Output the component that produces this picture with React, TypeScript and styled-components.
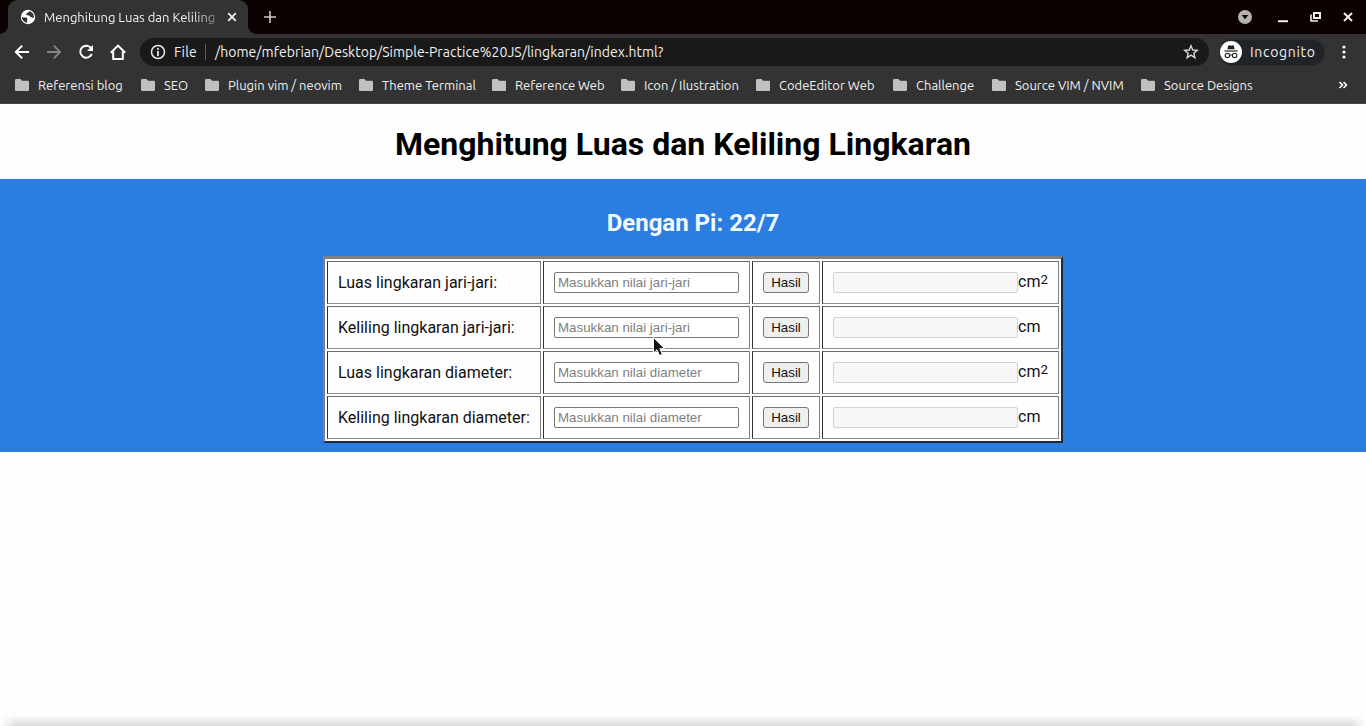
import React from "react";
import styled, { createGlobalStyle } from "styled-components";

const GlobalStyle = createGlobalStyle`
  * { box-sizing: border-box; }
  html, body { margin: 0; height: 100%; overflow: hidden; background: #fefefe; }
`;

const Window = styled.div`
  height: 726px;
  width: 1366px;
  display: flex;
  flex-direction: column;
  overflow: hidden;
  background: #fefefe;
  font-family: Roboto, "Liberation Sans", sans-serif;
`;

const ChromeText = styled.span<{ $w?: number; $size?: number; $spacing?: number }>`
  display: block;
  flex: none;
  width: ${(p) => (p.$w ? `${p.$w}px` : "auto")};
  font-family: Ubuntu, "Noto Sans", sans-serif;
  font-size: ${(p) => p.$size ?? 13}px;
  letter-spacing: ${(p) => p.$spacing ?? 0}px;
  line-height: 20px;
  color: #f0f0f0;
  white-space: nowrap;
`;

const TabStrip = styled.div`
  height: 34px;
  flex: none;
  display: flex;
  align-items: flex-start;
  background: #0b0100;
  padding-left: 8px;
`;

const Tab = styled.div`
  position: relative;
  width: 240px;
  height: 34px;
  display: flex;
  align-items: center;
  padding: 0 9px 0 12px;
  border-radius: 9px 9px 0 0;
  background: #333;
  &::before, &::after {
    content: "";
    position: absolute;
    bottom: 0;
    width: 8px;
    height: 8px;
  }
  &::before { left: -8px; background: radial-gradient(circle at 0 0, transparent 7.5px, #333 8px); }
  &::after { right: -8px; background: radial-gradient(circle at 100% 0, transparent 7.5px, #333 8px); }
`;

const TabTitle = styled.div`
  width: 175px;
  margin: 0 8px 0 8px;
  mask-image: linear-gradient(to right, #000 148px, rgba(0, 0, 0, 0.35) 172px);
`;

const NewTab = styled.div`
  margin: 10px 0 0 15px;
  height: 14px;
  display: flex;
`;

const WindowButtons = styled.div`
  margin-left: auto;
  height: 34px;
  display: flex;
  align-items: center;
  gap: 16px;
  padding-right: 10px;
`;

const Toolbar = styled.div`
  height: 36px;
  flex: none;
  display: flex;
  align-items: center;
  background: #333;
  padding: 0 14px 0 14px;
`;

const NavIcons = styled.div`
  display: flex;
  gap: 16px;
  width: 126px;
`;

const AddressBar = styled.div`
  width: 1069px;
  height: 28px;
  border-radius: 14px;
  background: #191919;
  display: flex;
  align-items: center;
  padding: 0 10px;
`;

const Divider = styled.div`
  width: 1px;
  height: 16px;
  margin: 0 9px 0 0;
  background: #5c5c5c;
`;

const Incognito = styled.div`
  width: 106px;
  height: 27px;
  margin-left: 10px;
  border-radius: 14px;
  background: #202327;
  box-shadow: inset 0 0 0 1px #2b2d30;
  display: flex;
  align-items: center;
  gap: 8px;
  padding-left: 1px;
`;

const Bookmarks = styled.div`
  height: 34px;
  flex: none;
  display: flex;
  align-items: center;
  padding: 0 18px 3px 15px;
  background: #333;
  border-bottom: 1px solid #454545;
`;

const Bookmark = styled.div<{ $w: number }>`
  width: ${(p) => p.$w}px;
  flex: none;
  display: flex;
  align-items: center;
  gap: 9px;
`;

const Overflow = styled.div`
  margin-left: auto;
  display: flex;
`;

const Title = styled.h1`
  height: 75px;
  margin: 0;
  flex: none;
  text-align: center;
  font-size: 32px;
  line-height: 38px;
  padding-top: 21px;
  font-weight: 700;
  color: #000;
`;

const Panel = styled.section`
  height: 273px;
  flex: none;
  display: flex;
  flex-direction: column;
  align-items: center;
  padding-left: 20px;
  background: #2b7de0;
`;

const Subtitle = styled.h2`
  margin: 30px 0 19px;
  height: 28px;
  font-size: 24px;
  line-height: 28px;
  font-weight: 700;
  text-align: center;
  color: #f4f9ff;
`;

const Table = styled.table`
  width: 740px;
  table-layout: fixed;
  border: 2px solid;
  border-color: #808080 #202a3a #202a3a #808080;
  border-top-width: 3px;
  border-bottom-width: 2px;
  border-collapse: separate;
  border-spacing: 2px;
  background: #fefefe;
  color: #111;
  font-size: 16px;
`;

const Cell = styled.td<{ $w: number }>`
  width: ${(p) => p.$w}px;
  height: 43px;
  padding: 0 10px;
  border: 1px solid;
  border-color: #6b6b6b #808080 #8c8c8c #333;
  white-space: nowrap;
  vertical-align: middle;
`;

const Field = styled.input`
  display: block;
  width: 185px;
  height: 21px;
  padding: 1px 3px;
  border: 1px solid #767676;
  border-radius: 2px;
  background: #fff;
  font: 13.333px "Liberation Sans", sans-serif;
  flex: none;
  &::placeholder { color: #808080; }
  &:disabled { border-color: #d3d3d3; background: #f7f7f7; }
`;

const Button = styled.button`
  display: block;
  width: 46px;
  height: 21px;
  padding: 0;
  border: 1px solid #767676;
  border-radius: 3px;
  background: #efefef;
  color: #111;
  font: 13.333px "Liberation Sans", sans-serif;
`;

const Result = styled.div`
  display: flex;
  align-items: center;
  height: 21px;
`;

const Unit = styled.span`
  line-height: 19px;
  height: 21px;
  sup { font-size: 13.333px; line-height: 0; vertical-align: 3px; }
`;

const BottomShade = styled.div`
  height: 11px;
  margin-top: auto;
  flex: none;
  background: linear-gradient(#fefefe, #dadada);
  mask-image: linear-gradient(to right, transparent, #000 16px, #000 1350px, transparent);
`;

const Pointer = styled.svg`
  position: absolute;
  left: 652px;
  top: 336px;
`;

const bookmarks: [string, number, number][] = [
  ["Referensi blog", 126, 86],
  ["SEO", 64, 25],
  ["Plugin vim / neovim", 154, 115],
  ["Theme Terminal", 133, 93],
  ["Reference Web", 129, 89],
  ["Icon / Ilustration", 135, 96],
  ["CodeEditor Web", 137, 97],
  ["Challenge", 99, 59],
  ["Source VIM / NVIM", 149, 110],
  ["Source Designs", 120, 90],
];

const rows = [
  { label: "Luas lingkaran jari-jari:", hint: "Masukkan nilai jari-jari", square: true },
  { label: "Keliling lingkaran jari-jari:", hint: "Masukkan nilai jari-jari", square: false },
  { label: "Luas lingkaran diameter:", hint: "Masukkan nilai diameter", square: true },
  { label: "Keliling lingkaran diameter:", hint: "Masukkan nilai diameter", square: false },
];

const Folder = () => (
  <svg width="14" height="12" viewBox="0 0 14 12">
    <path d="M1.2 0H5.5L7 1.8H13Q14 1.8 14 2.8V11Q14 12 13 12H1Q0 12 0 11V1.2Q0 0 1.2 0Z" fill="#c0c0c0" />
  </svg>
);

const FixedIcon = styled.svg`
  flex: none;
`;

const InfoIcon = styled.svg`
  flex: none;
  margin-right: 8px;
`;

const EndIcon = styled.svg`
  flex: none;
  margin-left: auto;
`;

const Globe = () => (
  <FixedIcon width="16" height="16" viewBox="0 0 16 16">
    <circle cx="8" cy="8" r="7.2" fill="#fff" />
    <path d="M1.9 7.8C3.4 9.2 5.4 7.8 6.8 8.8C8.2 9.9 6.4 10.6 7.4 13.8C4.3 13.6 1.7 10.9 1.9 7.8Z" fill="#333" />
    <path d="M9 2.2C9.2 4 6 3.6 6.2 5.6C7 7.3 9.2 5.6 10 7.3C10.5 9.2 12.2 8.8 13.8 9C14.4 5.4 12.4 2.6 9 2.2Z" fill="#333" />
  </FixedIcon>
);

export default function App() {
  return (
    <Window>
      <GlobalStyle />
      <TabStrip>
        <Tab>
          <Globe />
          <TabTitle><ChromeText>Menghitung Luas dan Keliling</ChromeText></TabTitle>
          <FixedIcon width="10" height="10" viewBox="0 0 10 10">
            <path d="M1.2 1.2L8.8 8.8M8.8 1.2L1.2 8.8" stroke="#f5f5f5" strokeWidth="1.7" />
          </FixedIcon>
        </Tab>
        <NewTab>
          <svg width="14" height="14" viewBox="0 0 14 14">
            <path d="M7 1V13M1 7H13" stroke="#ccc9c5" strokeWidth="1.6" />
          </svg>
        </NewTab>
        <WindowButtons>
          <svg width="16" height="16" viewBox="0 0 16 16">
            <circle cx="8" cy="8" r="7" fill="#b4b2ae" />
            <path d="M4.7 6H11.3L8 10.3Z" fill="#0b0100" />
          </svg>
          <svg width="23" height="16" viewBox="0 0 23 16">
            <path d="M9 12.2H19" stroke="#f0ece6" strokeWidth="2" />
          </svg>
          <svg width="16" height="16" viewBox="0 0 16 16">
            <path d="M6 4H12V9H6Z" stroke="#f0ece6" strokeWidth="2" fill="none" />
            <path d="M3 5.5V12H10" stroke="#f0ece6" strokeWidth="1.6" fill="none" />
          </svg>
          <svg width="16" height="16" viewBox="0 0 16 16">
            <path d="M4 4L12 12M12 4L4 12" stroke="#f0ece6" strokeWidth="2" />
          </svg>
        </WindowButtons>
      </TabStrip>

      <Toolbar>
        <NavIcons>
          <svg width="16" height="16" viewBox="0 0 16 16">
            <path d="M15 8H2M8.2 1.6L1.8 8L8.2 14.4" stroke="#fff" strokeWidth="2" fill="none" />
          </svg>
          <svg width="16" height="16" viewBox="0 0 16 16">
            <path d="M1 8H14M7.8 1.6L14.2 8L7.8 14.4" stroke="#858585" strokeWidth="1.8" fill="none" />
          </svg>
          <svg width="16" height="16" viewBox="0 0 16 16">
            <path d="M13.2 4.2A6 6 0 1 0 13.8 10" stroke="#fff" strokeWidth="2" fill="none" />
            <path d="M15 1V7H9Z" fill="#fff" />
          </svg>
          <svg width="16" height="16" viewBox="0 0 16 16">
            <path d="M0.8 8.8L8 1.6L15.2 8.8M3.2 7.5V15H12.8V7.5" stroke="#fff" strokeWidth="2" fill="none" />
          </svg>
        </NavIcons>
        <AddressBar>
          <InfoIcon width="16" height="16" viewBox="0 0 16 16">
            <circle cx="8" cy="8" r="6.5" stroke="#e8e8e8" strokeWidth="1.5" fill="none" />
            <path d="M8 7V12M8 4V5.8" stroke="#e8e8e8" strokeWidth="1.8" />
          </InfoIcon>
          <ChromeText $w={31} $size={14} $spacing={0.2}>File</ChromeText>
          <Divider />
          <ChromeText $size={14} $spacing={0.04}>/home/mfebrian/Desktop/Simple-Practice%20JS/lingkaran/index.html?</ChromeText>
          <EndIcon width="16" height="16" viewBox="0 0 16 16">
            <path d="M8 1.8L9.7 6L14.3 6.3L10.8 9.2L11.9 13.7L8 11.2L4.1 13.7L5.2 9.2L1.7 6.3L6.3 6Z" stroke="#d8d8d8" strokeWidth="1.4" fill="none" />
          </EndIcon>
        </AddressBar>
        <Incognito>
          <svg width="22" height="22" viewBox="0 0 22 22">
            <circle cx="11" cy="11" r="11" fill="#fff" />
            <path d="M7.3 8.2L8.3 4.6Q8.6 4 9.3 4.3L11 4.8L12.7 4.3Q13.4 4 13.7 4.6L14.7 8.2Z" fill="#222" />
            <path d="M4.5 10H17.5" stroke="#222" strokeWidth="1.2" />
            <path d="M9.6 14.2Q11 13.3 12.4 14.2" stroke="#222" fill="none" />
            <circle cx="7.4" cy="14.4" r="2.2" stroke="#222" strokeWidth="1.1" fill="none" />
            <circle cx="14.6" cy="14.4" r="2.2" stroke="#222" strokeWidth="1.1" fill="none" />
          </svg>
          <ChromeText $size={14} $spacing={0.7}>Incognito</ChromeText>
        </Incognito>
        <EndIcon width="16" height="16" viewBox="0 0 16 16">
          <circle cx="8" cy="3" r="1.6" fill="#fff" />
          <circle cx="8" cy="8" r="1.6" fill="#fff" />
          <circle cx="8" cy="13" r="1.6" fill="#fff" />
        </EndIcon>
      </Toolbar>

      <Bookmarks>
        {bookmarks.map(([name, pitch, width]) => (
          <Bookmark key={name} $w={pitch}>
            <Folder />
            <ChromeText $w={width}>{name}</ChromeText>
          </Bookmark>
        ))}
        <Overflow>
          <svg width="10" height="8" viewBox="0 0 10 8">
            <path d="M1.5 1L4.5 4L1.5 7M5.5 1L8.5 4L5.5 7" stroke="#fff" strokeWidth="1.6" fill="none" />
          </svg>
        </Overflow>
      </Bookmarks>

      <Title>Menghitung Luas dan Keliling Lingkaran</Title>
      <Panel>
        <Subtitle>Dengan Pi: 22/7</Subtitle>
        <Table>
          <tbody>
            {rows.map((row) => (
              <tr key={row.label}>
                <Cell $w={214}>{row.label}</Cell>
                <Cell $w={207}><Field placeholder={row.hint} /></Cell>
                <Cell $w={68}><Button>Hasil</Button></Cell>
                <Cell $w={237}>
                  <Result>
                    <Field disabled />
                    <Unit>cm{row.square && <sup>2</sup>}</Unit>
                  </Result>
                </Cell>
              </tr>
            ))}
          </tbody>
        </Table>
      </Panel>
      <BottomShade />
      <Pointer width="14" height="22" viewBox="0 0 14 22">
        <path d="M1.5 1.5V17L5 13.7L7.5 19.5L10.3 18.2L7.8 12.7H12.6Z" fill="#111" stroke="#fff" strokeWidth="1" />
      </Pointer>
    </Window>
  );
}
